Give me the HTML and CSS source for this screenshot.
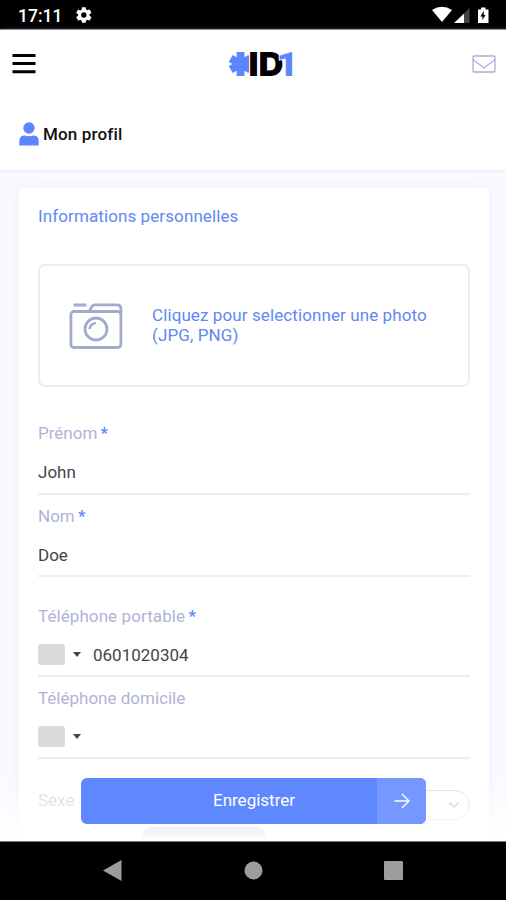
FILE: index.html
```html
<!DOCTYPE html>
<html lang="fr">
<head>
<meta charset="utf-8">
<title>Mon profil</title>
<link rel="stylesheet" href="styles.css">
</head>
<body>
<div class="phone">
  <div class="status">
    <span class="clock">17:11</span>
    <svg class="gear" width="18" height="18" viewBox="0 0 24 24"><path fill="#fff" fill-rule="evenodd" d="M19.4 13a7.500 7.500 0 0 0 0-2l2.200-1.700c.2-.15.25-.4.120-.65l-2.100-3.600c-.13-.22-.4-.3-.63-.22l-2.500 1a7.700 7.700 0 0 0-1.750-1L14.350 2.200c-.03-.25-.25-.44-.5-.44h-4.200c-.25 0-.46.2-.5.44L8.800 4.850c-.63.26-1.200.6-1.750 1l-2.500-1c-.23-.1-.5 0-.63.22l-2.100 3.600c-.13.22-.08.5.12.65L4.100 11a7.500 7.500 0 0 0 0 2l-2.150 1.700c-.2.15-.25.42-.12.64l2.100 3.620c.13.22.4.3.63.22l2.500-1c.54.4 1.120.75 1.750 1l.38 2.650c.03.25.25.43.5.43h4.200c.25 0 .46-.18.5-.43l.38-2.650c.63-.25 1.200-.6 1.750-1l2.500 1c.23.08.5 0 .63-.22l2.100-3.600c.13-.23.08-.5-.12-.65zM11.750 15.600a3.600 3.600 0 1 1 0-7.200 3.600 3.600 0 0 1 0 7.200z"/></svg>
    <svg class="signals" width="60" height="20" viewBox="0 0 60 20">
      <path fill="#fff" d="M0 5Q10-1.500 20 5L10 17z"/>
      <path fill="#fff" d="M22 18 32 8.500V18z"/><path fill="#444" d="M32 8.500 37.500 3v15H32z"/>
      <path fill="#fff" d="M46 4.500h3V2.500h4.500v2h3V18H46z"/>
      <path fill="#000" d="m51.800 6-3.500 5.500h2.100V15l3.200-5h-1.800z"/>
    </svg>
  </div>
  <header class="header">
    <div class="topbar">
      <svg width="24" height="22" viewBox="0 0 24 22"><path d="M.5 2.500h23M.5 10.600h23M.5 18.700h23" stroke="#000" stroke-width="3"/></svg>
      <svg class="logo" width="72" height="48" viewBox="0 -9 72 48">
        <path d="M12.500 3v24M2.700 9.500l19.600 11M2.700 20.500 22.300 9.500" stroke="#5c85ff" stroke-width="7.800"/>
        <path d="M21 0h5v30h-5z" fill="#fff"/>
        <text class="logo-text" x="20.500" y="27" textLength="35" lengthAdjust="spacingAndGlyphs">ID</text>
        <text class="logo-one" x="48.500" y="27" textLength="22" lengthAdjust="spacingAndGlyphs">1</text>
      </svg>
      <svg width="24" height="18" viewBox="0 0 24 18" fill="none" stroke="#aaaed5" stroke-width="1.300"><rect x="1" y="1" width="22" height="16" rx="1"/><path d="m1 4.500 11 8.500 11-8.500"/></svg>
    </div>
    <div class="title">
      <svg width="20" height="24" viewBox="0 0 20 24" fill="#5c85ff"><circle cx="10" cy="6" r="5.700"/><path d="M.3 23.500V19q0-5.500 5.500-5.500 4.200 1.500 8.400 0 5.500 0 5.500 5.500v4.500z"/></svg>
      <h1>Mon profil</h1>
    </div>
  </header>
  <main class="content">
    <section class="card">
      <h2>Informations personnelles</h2>
      <div class="photo">
        <svg width="54" height="48" viewBox="0 0 54 48" fill="none" stroke="#a3abcc" stroke-width="2.800"><rect x="1.900" y="9.500" width="50" height="36" rx="3"/><path d="M4.500 3h13M20 9.500l3-5q1-1.700 3-1.700h22q3.900 0 3.900 4V12"/><circle cx="27" cy="27" r="11"/><path d="M20.500 27q.5-5 6.500-6" stroke-width="2.500"/></svg>
        <p>Cliquez pour selectionner une photo (JPG, PNG)</p>
      </div>
      <div class="field">
        <label>Prénom <b>*</b></label><div class="value">John</div>
      </div>
      <div class="field">
        <label>Nom <b>*</b></label><div class="value">Doe</div>
      </div>
      <div class="field phone-first">
        <label>Téléphone portable <b>*</b></label>
        <div class="value tel"><i class="flag"></i><i class="caret"></i><span>0601020304</span></div>
      </div>
      <div class="field">
        <label>Téléphone domicile</label>
        <div class="value tel"><i class="flag"></i><i class="caret"></i></div>
      </div>
      <div class="gender"><span>Sexe</span><div class="select"><svg width="12" height="8" viewBox="0 0 12 8" fill="none" stroke="#c4c7d6" stroke-width="1.800"><path d="m1 1.500 5 4.500 5-4.500"/></svg></div></div>
    </section>
    <div class="fade"></div>
    <div class="peek"></div>
    <button class="save"><span class="save-label">Enregistrer</span><span class="save-arrow"><svg width="16" height="16" viewBox="0 0 16 16" fill="none" stroke="#fff" stroke-width="1.400"><path d="M.5 8h14.500M8 1l7 7-7 7"/></svg></span></button>
  </main>
  <nav class="nav">
    <svg width="506" height="58" viewBox="0 0 506 58" fill="#9c9c9c"><path d="M103 28.500 121.500 18v21z"/><circle cx="253.500" cy="28.500" r="9"/><rect x="384" y="19" width="19" height="19" rx="1"/></svg>
  </nav>
</div>
</body>
</html>
```

FILE: styles.css
```css
* { box-sizing: border-box; }
body { margin: 0; font: 17px/20px Roboto, sans-serif; background: #fff; }
.phone { width: 506px; height: 900px; display: flex; flex-direction: column; overflow: hidden; }
.status { height: 30px; flex: none; background: #000; border-bottom: 1px solid #777; display: flex; align-items: center; padding: 1px 14px 0 18px; color: #fff; }
.clock { font-size: 17.5px; font-weight: 500; width: 57px; padding-top: 2px; }
.signals { margin-left: auto; }
.header { height: 140px; flex: none; background: #fff; position: relative; z-index: 1; box-shadow: 0 1px 4px #e2e8ff; }
.topbar { height: 68px; display: flex; align-items: center; justify-content: space-between; padding: 0 10px 0 12px; }
.logo { display: block; margin-left: 20px; }
.logo-text { font: 900 33px Inter, sans-serif; fill: #000; }
.logo-one { font: 900 34px Roboto, sans-serif; fill: #5c85ff; stroke: #fff; stroke-width: 1.5px; paint-order: stroke; }
.title { display: flex; align-items: center; gap: 4px; padding: 24px 0 0 19px; }
h1 { margin: 0; font-size: 17px; font-weight: 500; line-height: 20px; letter-spacing: 0.15px; color: #111; }
.content { height: 671px; flex: none; position: relative; overflow: hidden; background: #f9faff; padding: 18px 17px 0 19px; }
.card { height: 700px; padding: 18px 19px 0; background: #fff; border-radius: 5px; box-shadow: 0 0 14px #ecefff; }
h2 { margin: 0 0 38px; font-size: 17px; font-weight: 400; line-height: 20px; letter-spacing: 0.1px; color: #6188f4; }
.photo { height: 123px; border: 2px solid #ebebfa; border-radius: 7px; display: flex; align-items: center; gap: 29px; padding: 0 29px; margin-bottom: 36px; }
.photo svg { flex: none; }
.photo p { margin: -2px 0 0; color: #6188f4; letter-spacing: 0.1px; }
.field { height: 82.300px; border-bottom: 2px solid #ececfb; padding-top: 11px; }
.field:nth-of-type(2) { height: 71.800px; padding-top: 0; }
label { display: block; color: #b0b4d4; }
label b { color: #5c85ff; font-weight: 500; margin-left: -1px; }
.value { margin-top: 19px; color: #444; }
.phone-first { height: 99.600px; padding-top: 29px; }
.phone-first label { letter-spacing: 0.08px; }
.tel { display: flex; align-items: center; margin-top: 18px; }
.flag { width: 27px; height: 21px; border-radius: 3px; background: #dadada; }
.caret { border: 4px solid transparent; border-top: 5px solid #444; border-bottom: 0; margin: 0 12px 0 8px; }
.gender { height: 30px; margin-top: 31px; display: flex; justify-content: space-between; color: #ced0dd; }
.select { width: 130px; height: 30px; border: 1px solid #d5d7e3; border-radius: 15px; display: flex; align-items: center; justify-content: flex-end; padding-right: 9px; }
.fade { position: absolute; left: 0; right: 0; bottom: 0; height: 70px; background: linear-gradient(#fff0, #fff); }
.peek { position: absolute; left: 142px; width: 124px; top: 657px; height: 10px; border-radius: 12px 12px 0 0; background: linear-gradient(#f0f0fd, #f8f8fe); }
.save { position: absolute; left: 81px; top: 608px; width: 345px; height: 46px; display: flex; padding: 0; border: 0; border-radius: 6px; overflow: hidden; background: #5f88ff; color: #fff; font: 400 17px/20px Roboto, sans-serif; }
.save-label { flex: 1; align-self: center; padding: 0 0 3px 50px; text-align: center; }
.save-arrow { width: 49px; align-self: stretch; display: flex; align-items: center; justify-content: center; background: #7597ff; }
.nav { height: 59px; flex: none; background: #000; border-top: 1px solid #777; }
.nav svg { display: block; }
```
